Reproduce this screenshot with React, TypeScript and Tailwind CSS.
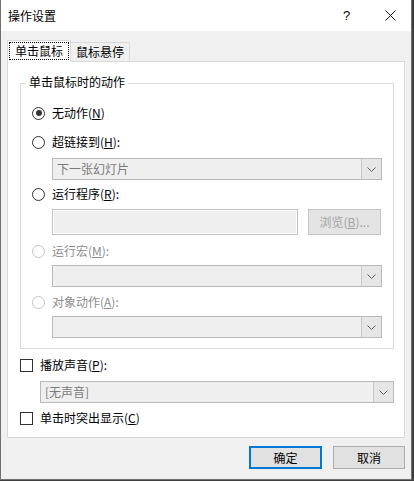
import React from "react";

const font = { fontFamily: '"Noto Sans CJK SC", "Noto Sans", sans-serif' };

function Chevron() {
  return (
    <svg width="9" height="5" viewBox="0 0 9 5">
      <polyline points="0.5,0.5 4.5,4.5 8.5,0.5" fill="none" stroke="#606060" strokeWidth="1" />
    </svg>
  );
}

function Combo({ text, w, ml }: { text?: string; w: string; ml: string }) {
  return (
    <div className={`${w} ${ml} h-[22px] flex border border-[#b9b9b9] bg-[#efefef]`}>
      <div className="flex-1 flex items-center pl-[4px] text-[12px] leading-none text-[#7a7a7a]">{text}</div>
      <div className="w-[20px] h-full border-l border-[#c8c8c8] bg-[#e6e6e6] flex items-center justify-center">
        <Chevron />
      </div>
    </div>
  );
}

function Radio({ checked, disabled, children }: { checked?: boolean; disabled?: boolean; children: React.ReactNode }) {
  return (
    <div className="h-[20px] flex items-center">
      <div
        className={`w-[13px] h-[13px] rounded-full border bg-white flex items-center justify-center ${
          disabled ? "border-[#c4c4c4]" : "border-[#333333]"
        }`}
      >
        {checked && <div className="w-[6px] h-[6px] rounded-full bg-[#333333]" />}
      </div>
      <span className={`ml-[7px] text-[12px] leading-none ${disabled ? "text-[#8c8c8c]" : "text-black"}`}>{children}</span>
    </div>
  );
}

function Check({ children }: { children: React.ReactNode }) {
  return (
    <div className="h-[20px] flex items-center">
      <div className="w-[13px] h-[13px] border border-[#333333] bg-white" />
      <span className="ml-[7px] text-[12px] leading-none text-black">{children}</span>
    </div>
  );
}

export default function App() {
  return (
    <div className="w-[414px] h-[481px] bg-[#3f3f3f]" style={font}>
      <div className="w-[412px] h-[480px] border-l border-r border-b border-[#707070] flex flex-col">
        <div className="h-[31px] bg-white flex items-center pl-[7px] relative">
          <span className="text-[12px] leading-none text-black">操作设置</span>
          <span className="absolute left-[342px] top-[9px] text-[13px] leading-none text-black" style={{ fontFamily: '"Liberation Sans", sans-serif' }}>?</span>
          <svg className="absolute left-[384px] top-[10px]" width="11" height="11" viewBox="0 0 11 11">
            <line x1="0.5" y1="0.5" x2="10.5" y2="10.5" stroke="#111" strokeWidth="1" />
            <line x1="10.5" y1="0.5" x2="0.5" y2="10.5" stroke="#111" strokeWidth="1" />
          </svg>
        </div>
        <div className="flex-1 bg-[#f0f0f0] pl-[6px] pt-[9px]">
          <div className="flex items-end h-[21px]">
            <div className="relative z-10 h-[22px] w-[64px] -mb-px bg-white border-t border-l border-r border-[#d9d9d9] flex items-start justify-center pt-[1px]">
              <div className="w-[60px] h-[18px] border border-dotted border-black flex items-center justify-center text-[12px] leading-none text-black">
                单击鼠标
              </div>
            </div>
            <div className="h-[19px] w-[59px] bg-[#f0f0f0] border-t border-r border-[#d9d9d9] flex items-center justify-center text-[12px] leading-none text-black">
              鼠标悬停
            </div>
          </div>
          <div className="w-[398px] h-[377px] bg-white border border-[#d9d9d9] pl-[12px] pt-[21px]">
            <div className="relative w-[374px] h-[266px] border border-[#dcdcdc] pl-[11px] pt-[19px]">
              <div className="absolute left-[5px] -top-[8px] bg-white px-[3px] text-[12px] leading-none text-black">单击鼠标时的动作</div>
              <Radio checked>
                无动作(<u>N</u>)
              </Radio>
              <div className="mt-[9px]">
                <Radio>
                  超链接到(<u>H</u>):
                </Radio>
              </div>
              <div className="mt-[6px]">
                <Combo text="下一张幻灯片" w="w-[330px]" ml="ml-[20px]" />
              </div>
              <div className="mt-[4px]">
                <Radio>
                  运行程序(<u>R</u>):
                </Radio>
              </div>
              <div className="mt-[5px] ml-[20px] flex items-center">
                <div className="w-[246px] h-[26px] border border-[#c2c2c2] bg-[#efefef] shadow-[inset_0_0_0_1px_#ffffff]" />
                <div className="ml-[10px] w-[73px] h-[26px] border border-[#c4c4c4] bg-[#e4e4e4] flex items-center justify-center text-[12px] leading-none text-[#a3a3a3]">
                  浏览(<u>B</u>)...
                </div>
              </div>
              <div className="mt-[6px]">
                <Radio disabled>
                  运行宏(<u>M</u>):
                </Radio>
              </div>
              <div className="mt-[4px]">
                <Combo w="w-[330px]" ml="ml-[20px]" />
              </div>
              <div className="mt-[5px]">
                <Radio disabled>
                  对象动作(<u>A</u>):
                </Radio>
              </div>
              <div className="mt-[4px]">
                <Combo w="w-[330px]" ml="ml-[20px]" />
              </div>
            </div>
            <div className="mt-[6px]">
              <Check>
                播放声音(<u>P</u>):
              </Check>
            </div>
            <div className="mt-[6px]">
              <Combo text="[无声音]" w="w-[354px]" ml="ml-[20px]" />
            </div>
            <div className="mt-[5px]">
              <Check>
                单击时突出显示(<u>C</u>)
              </Check>
            </div>
          </div>
          <div className="mt-[8px] w-[398px] flex justify-end gap-[11px]">
            <div className="w-[73px] h-[23px] border-2 border-[#0078d7] bg-[#e1e1e1] flex items-center justify-center text-[12px] leading-none text-black">
              确定
            </div>
            <div className="w-[72px] h-[23px] border border-[#adadad] bg-[#e1e1e1] flex items-center justify-center text-[12px] leading-none text-black">
              取消
            </div>
          </div>
        </div>
      </div>
    </div>
  );
}
